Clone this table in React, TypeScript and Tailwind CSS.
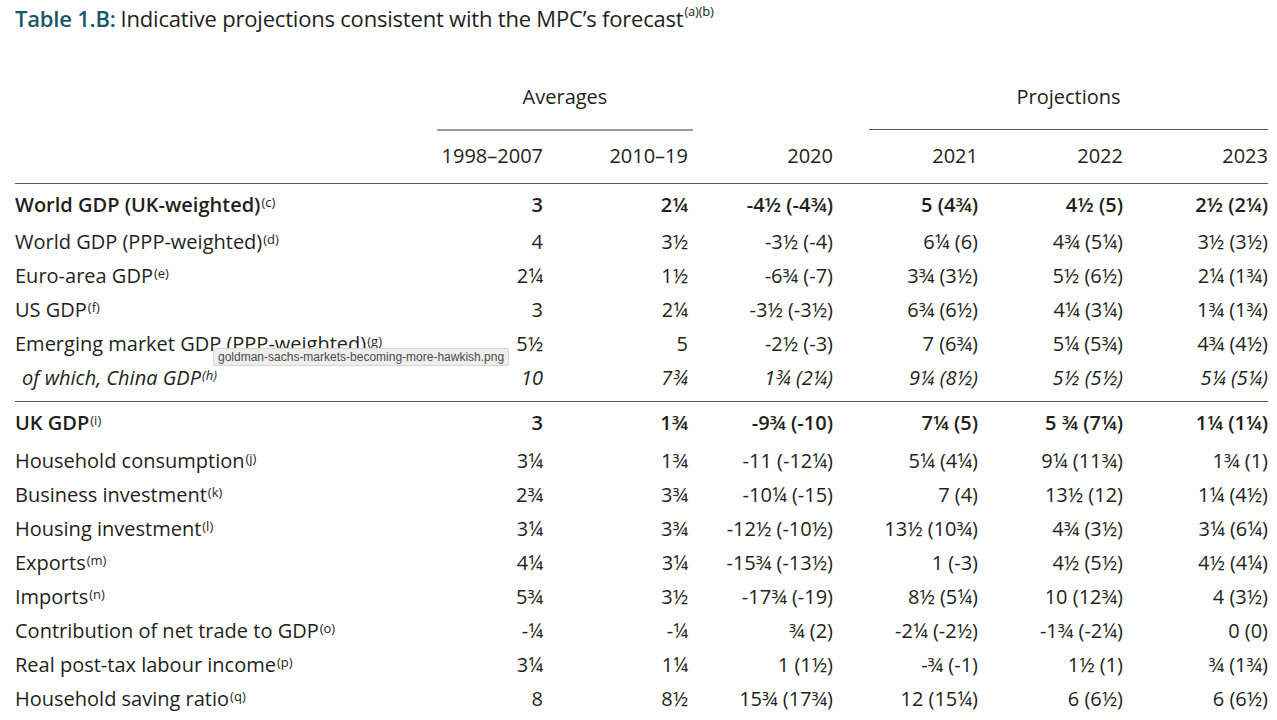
import React from "react";

type Row = { label: string; note: string; vals: string[]; kind?: "bold" | "italic" };

const group1: Row[] = [
  { label: "World GDP (UK-weighted)", note: "(c)", vals: ["3", "2¼", "-4½ (-4¾)", "5 (4¾)", "4½ (5)", "2½ (2¼)"], kind: "bold" },
  { label: "World GDP (PPP-weighted)", note: "(d)", vals: ["4", "3½", "-3½ (-4)", "6¼ (6)", "4¾ (5¼)", "3½ (3½)"] },
  { label: "Euro-area GDP", note: "(e)", vals: ["2¼", "1½", "-6¾ (-7)", "3¾ (3½)", "5½ (6½)", "2¼ (1¾)"] },
  { label: "US GDP", note: "(f)", vals: ["3", "2¼", "-3½ (-3½)", "6¾ (6½)", "4¼ (3¼)", "1¾ (1¾)"] },
  { label: "Emerging market GDP (PPP-weighted)", note: "(g)", vals: ["5½", "5", "-2½ (-3)", "7 (6¾)", "5¼ (5¾)", "4¾ (4½)"] },
  { label: "of which, China GDP", note: "(h)", vals: ["10", "7¾", "1¾ (2¼)", "9¼ (8½)", "5½ (5½)", "5¼ (5¼)"], kind: "italic" },
];

const group2: Row[] = [
  { label: "UK GDP", note: "(i)", vals: ["3", "1¾", "-9¾ (-10)", "7¼ (5)", "5 ¾ (7¼)", "1¼ (1¼)"], kind: "bold" },
  { label: "Household consumption", note: "(j)", vals: ["3¼", "1¾", "-11 (-12¼)", "5¼ (4¼)", "9¼ (11¾)", "1¾ (1)"] },
  { label: "Business investment", note: "(k)", vals: ["2¾", "3¾", "-10¼ (-15)", "7 (4)", "13½ (12)", "1¼ (4½)"] },
  { label: "Housing investment", note: "(l)", vals: ["3¼", "3¾", "-12½ (-10½)", "13½ (10¾)", "4¾ (3½)", "3¼ (6¼)"] },
  { label: "Exports", note: "(m)", vals: ["4¼", "3¼", "-15¾ (-13½)", "1 (-3)", "4½ (5½)", "4½ (4¼)"] },
  { label: "Imports", note: "(n)", vals: ["5¾", "3½", "-17¾ (-19)", "8½ (5¼)", "10 (12¾)", "4 (3½)"] },
  { label: "Contribution of net trade to GDP", note: "(o)", vals: ["-¼", "-¼", "¾ (2)", "-2¼ (-2½)", "-1¾ (-2¼)", "0 (0)"] },
  { label: "Real post-tax labour income", note: "(p)", vals: ["3¼", "1¼", "1 (1½)", "-¾ (-1)", "1½ (1)", "¾ (1¾)"] },
  { label: "Household saving ratio", note: "(q)", vals: ["8", "8½", "15¾ (17¾)", "12 (15¼)", "6 (6½)", "6 (6½)"] },
];

function DataRow({ r }: { r: Row }) {
  const weight = r.kind === "bold" ? "font-semibold" : "font-normal";
  const style = r.kind === "italic" ? "italic" : "not-italic";
  return (
    <div className={`grid grid-cols-[383px_repeat(6,145px)] h-[34px] items-center ${weight} ${style}`}>
      <div className={`whitespace-nowrap ${r.kind === "italic" ? "pl-[7px]" : ""}`}>
        {r.label}
        <span className="text-[13px] font-normal relative top-[-5px] ml-[1px]">{r.note}</span>
      </div>
      {r.vals.map((v, i) => (
        <div key={i} className="text-right whitespace-nowrap">
          {v}
        </div>
      ))}
    </div>
  );
}

export default function App() {
  return (
    <div
      className="relative w-[1277px] h-[720px] bg-white text-[#231f20] overflow-hidden"
      style={{ fontFamily: '"Open Sans", "Noto Sans", sans-serif' }}
    >
      <div className="pl-[15px] pr-[10px]">
        <div className="h-[36px] flex items-center text-[22px] tracking-[-0.2px] whitespace-nowrap">
          <span className="font-semibold text-[#16586b]">Table 1.B:</span>
          <span className="ml-[5px]">Indicative projections consistent with the MPC’s forecast</span>
          <span className="text-[13px] relative top-[-6px] ml-[1px]">(a)(b)</span>
        </div>

        <div className="text-[20px]">
          <div className="grid grid-cols-[383px_repeat(6,145px)] mt-[46px] h-[28px] items-center">
            <div className="col-start-2 col-span-2 text-center pl-[39px] mr-[-5px]">Averages</div>
            <div className="col-start-5 col-span-3 text-center pl-[36px]">Projections</div>
          </div>
          <div className="grid grid-cols-[383px_repeat(6,145px)] mt-[19px]">
            <div className="col-start-2 col-span-2 ml-[39px] mr-[-5px] h-[2px] bg-[#9a9a9a]" />
            <div className="col-start-5 col-span-3 ml-[36px] h-[1px] bg-[#555]" />
          </div>
          <div className="grid grid-cols-[383px_repeat(6,145px)] mt-[10px] h-[28px] items-center">
            <div />
            <div className="text-right">1998–2007</div>
            <div className="text-right">2010–19</div>
            <div className="text-right">2020</div>
            <div className="text-right">2021</div>
            <div className="text-right">2022</div>
            <div className="text-right">2023</div>
          </div>
          <div className="mt-[14px] h-[1px] bg-[#555] w-[1253px]" />

          <div className="pt-[4px]">
            {group1.map((r, i) => (
              <div key={i} className={i === 0 ? "mb-[3px]" : ""}>
                <DataRow r={r} />
              </div>
            ))}
          </div>
          <div className="mt-[6px] h-[1px] bg-[#555] w-[1253px]" />
          <div className="pt-[4px]">
            {group2.map((r, i) => (
              <div key={i} className={i === 0 ? "mb-[4px]" : ""}>
                <DataRow r={r} />
              </div>
            ))}
          </div>
        </div>
      </div>

      <div
        className="absolute left-[213px] top-[348px] h-[18px] px-[4px] flex items-center bg-[#efeded] border border-[#d6d4d4] rounded-[2px] text-[12px] text-[#4a4a4a] whitespace-nowrap"
        style={{ fontFamily: '"Liberation Sans", Arial, sans-serif' }}
      >
        goldman-sachs-markets-becoming-more-hawkish.png
      </div>
    </div>
  );
}
